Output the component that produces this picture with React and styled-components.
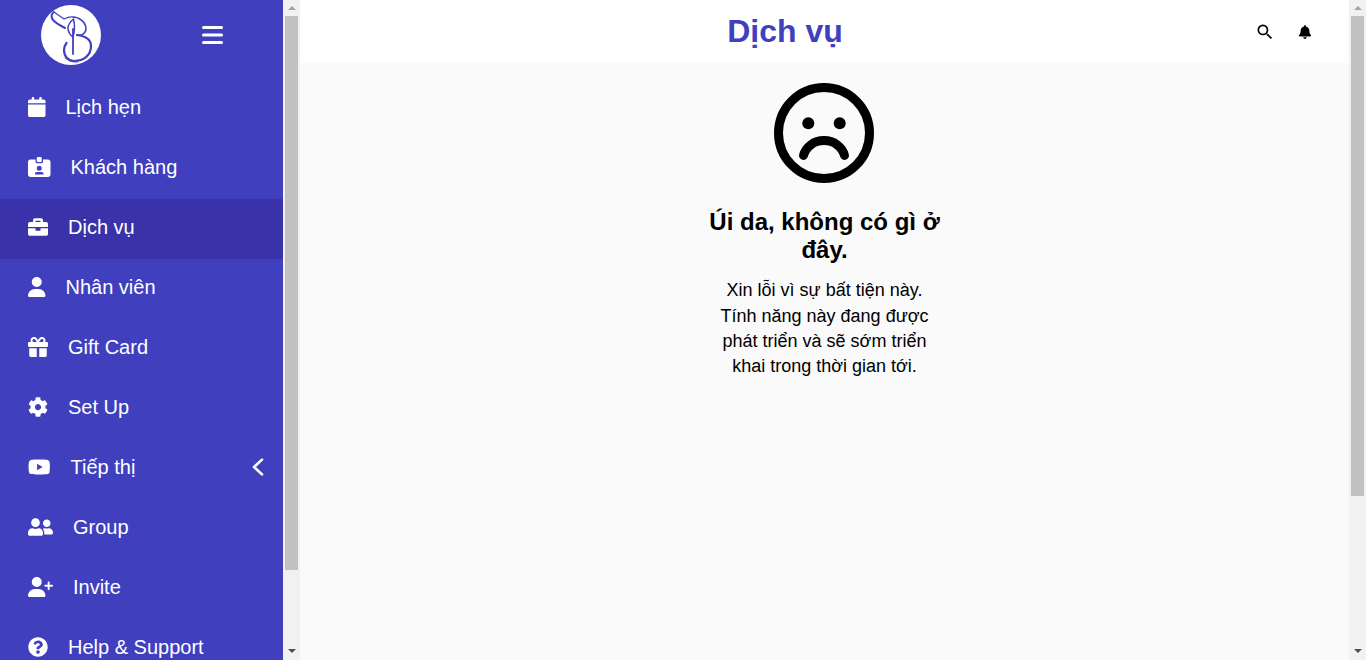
import React from "react";
import styled, { createGlobalStyle } from "styled-components";
import {
  FaBell,
  FaBriefcase,
  FaCog,
  FaQuestionCircle,
  FaUserFriends,
  FaYoutube,
} from "react-icons/fa";
import {
  FaCalendar,
  FaGift,
  FaIdCardClip,
  FaUser,
  FaUserPlus,
} from "react-icons/fa6";
import { MdSearch } from "react-icons/md";

const GlobalStyle = createGlobalStyle`
  html, body {
    margin: 0;
    padding: 0;
    background: #fff;
    font-family: "Liberation Sans", Arial, sans-serif;
    overflow: hidden;
  }
  * {
    box-sizing: border-box;
  }
`;

const Shell = styled.div`
  display: flex;
  height: 660px;
`;

const Rail = styled.div`
  flex: 0 0 17px;
  display: flex;
  flex-direction: column;
  background: #f1f1f1;
`;

const RailArrow = styled.div`
  display: flex;
  align-items: center;
  justify-content: center;
  flex: none;
  height: 16px;
  margin-top: ${(p) => (p.$down ? "auto" : "0")};

  &::before {
    content: "";
    border-left: 4px solid transparent;
    border-right: 4px solid transparent;
    border-bottom: ${(p) => (p.$down ? "0" : "4px solid #a3a3a3")};
    border-top: ${(p) => (p.$down ? "4px solid #505050" : "0")};
    transform: translateY(${(p) => (p.$down ? "-1px" : "0")});
  }
`;

const RailThumb = styled.div`
  flex: none;
  height: ${(p) => p.$size}px;
  margin: 0 2px;
  background: #c1c1c1;
`;

const Sidebar = styled.aside`
  flex: 0 0 300px;
  display: flex;
  background: #4040bf;
`;

const SidebarInner = styled.nav`
  flex: 1;
  min-width: 0;
  overflow: hidden;
  color: #fff;
`;

const Brand = styled.div`
  display: flex;
  align-items: center;
  height: 79px;
  padding: 0 0 9px 41px;
`;

const Logo = styled.svg`
  flex: none;
  width: 60px;
  height: 60px;
`;

const Burger = styled.button`
  display: flex;
  margin-left: 101px;
  padding: 0;
  border: 0;
  background: none;
`;

const MenuItem = styled.a`
  display: flex;
  align-items: center;
  height: 60px;
  padding: 0 19px 4px 28px;
  color: #fff;
  font-size: 20px;
  background: ${(p) => (p.$active ? "#3a32a8" : "transparent")};
`;

const MenuIcon = styled.span`
  flex: none;
  display: flex;
  width: ${(p) => p.$width}px;
  margin-right: 20px;

  svg {
    width: 100%;
    height: 20px;
  }
`;

const Caret = styled.svg`
  flex: none;
  width: 12px;
  height: 18px;
  margin-left: auto;
`;

const Main = styled.div`
  flex: 1;
  min-width: 0;
  display: flex;
  background: #fafafa;
`;

const Page = styled.main`
  flex: 1;
  min-width: 0;
  overflow: hidden;
`;

const TopBar = styled.header`
  display: flex;
  align-items: center;
  height: 63px;
  padding: 0 24px 0 25px;
  background: #fff;
`;

const PageTitle = styled.h1`
  flex: 1;
  margin: 0;
  color: #4040bf;
  font-size: 32px;
  font-weight: 700;
  text-align: center;
`;

const IconButton = styled.button`
  display: flex;
  align-items: center;
  justify-content: center;
  width: 40px;
  height: 40px;
  padding: 0;
  border: 0;
  background: none;
  color: #000;

  svg {
    width: auto;
    height: ${(p) => p.$size}px;
  }
`;

const Empty = styled.section`
  display: flex;
  flex-direction: column;
  align-items: center;
  padding-top: 20px;
  color: #000;
  text-align: center;
`;

const Face = styled.svg`
  flex: none;
  width: 100px;
  height: 100px;
  margin-right: 1px;
`;

const Heading = styled.h2`
  width: 250px;
  margin: 25px 0 13.6px;
  font-size: 24px;
  font-weight: 700;
  line-height: 28.4px;
`;

const Message = styled.p`
  width: 220px;
  margin: 0;
  font-size: 18px;
  line-height: 25.3px;
`;

const menu = [
  { icon: FaCalendar, width: 17.5, label: "Lịch hẹn" },
  { icon: FaIdCardClip, width: 22.5, label: "Khách hàng" },
  { icon: FaBriefcase, width: 20, label: "Dịch vụ", active: true },
  { icon: FaUser, width: 17.5, label: "Nhân viên" },
  { icon: FaGift, width: 20, label: "Gift Card" },
  { icon: FaCog, width: 20, label: "Set Up" },
  { icon: FaYoutube, width: 22.5, label: "Tiếp thị", caret: true },
  { icon: FaUserFriends, width: 25, label: "Group" },
  { icon: FaUserPlus, width: 25, label: "Invite" },
  { icon: FaQuestionCircle, width: 20, label: "Help & Support" },
];

function ScrollRail({ thumb }) {
  return (
    <Rail>
      <RailArrow />
      <RailThumb $size={thumb} />
      <RailArrow $down />
    </Rail>
  );
}

function BrandMark() {
  return (
    <Logo viewBox="0 0 60 60">
      <circle cx="30" cy="30" r="30" fill="#fff" />
      <g fill="none" stroke="#4040bf" strokeLinecap="round" strokeLinejoin="round">
        {/* snout and ear */}
        <path strokeWidth="1.2" d="M13 7 L23 14 C26 12.5 29 11.5 32 12" />
        <path strokeWidth="2" d="M13 7 C10 9 10 12 12 15 C15 18 20 21 24 23" />
        {/* leaf */}
        <path strokeWidth="1.5" d="M32.5 14 C29 17 27 20 27 23 C27 27 29 30 32 32 C33.5 27 34 20 32.5 14 Z" />
        {/* upper bowl of the B */}
        <path strokeWidth="1.6" d="M32 12 C38 12 45 17 45 24 C45 28 41 31 36 30" />
        {/* lower bowl of the B */}
        <path strokeWidth="2.2" d="M36 30 C44 31 50 34 50 41 C50 50 43 56 33 56 C27 56 23 51 23 45 C23 42 24 40 25.5 38" />
        <path strokeWidth="0.8" d="M24 53 C28 56 33 58 37 57" />
      </g>
      <path d="M32 24 V49" stroke="#4040bf" strokeWidth="1.8" strokeLinecap="round" />
    </Logo>
  );
}

function SadFace() {
  return (
    <Face viewBox="0 0 100 100">
      <circle cx="50" cy="50" r="45.5" fill="none" stroke="#000" strokeWidth="9" />
      <circle cx="34.3" cy="40.3" r="6" fill="#000" />
      <circle cx="65.7" cy="40.3" r="6" fill="#000" />
      <path
        d="M29.5 72.5 A21 19 0 0 1 70.5 72.5"
        fill="none"
        stroke="#000"
        strokeWidth="9"
        strokeLinecap="round"
      />
    </Face>
  );
}

export default function App() {
  return (
    <>
      <GlobalStyle />
      <Shell>
        <Sidebar>
          <SidebarInner>
            <Brand>
              <BrandMark />
              <Burger aria-label="menu">
                <svg width="21" height="18" viewBox="0 0 21 18" fill="#fff">
                  <rect y="0" width="21" height="3" rx="1.5" />
                  <rect y="7.5" width="21" height="3" rx="1.5" />
                  <rect y="15" width="21" height="3" rx="1.5" />
                </svg>
              </Burger>
            </Brand>
            {menu.map(({ icon: Icon, width, label, active, caret }) => (
              <MenuItem key={label} $active={active}>
                <MenuIcon $width={width}>
                  <Icon />
                </MenuIcon>
                <span>{label}</span>
                {caret && (
                  <Caret viewBox="0 0 12 18">
                    <path
                      d="M10 1.6 L2 9 L10 16.4"
                      fill="none"
                      stroke="#fff"
                      strokeWidth="2.6"
                      strokeLinecap="round"
                      strokeLinejoin="round"
                    />
                  </Caret>
                )}
              </MenuItem>
            ))}
          </SidebarInner>
          <ScrollRail thumb={554} />
        </Sidebar>
        <Main>
          <Page>
            <TopBar>
              <PageTitle>Dịch vụ</PageTitle>
              <IconButton aria-label="search" $size={20}>
                <MdSearch />
              </IconButton>
              <IconButton aria-label="notifications" $size={14}>
                <FaBell />
              </IconButton>
            </TopBar>
            <Empty>
              <SadFace />
              <Heading>Úi da, không có gì ở đây.</Heading>
              <Message>
                Xin lỗi vì sự bất tiện này. Tính năng này đang được phát triển
                và sẽ sớm triển khai trong thời gian tới.
              </Message>
            </Empty>
          </Page>
          <ScrollRail thumb={480} />
        </Main>
      </Shell>
    </>
  );
}
